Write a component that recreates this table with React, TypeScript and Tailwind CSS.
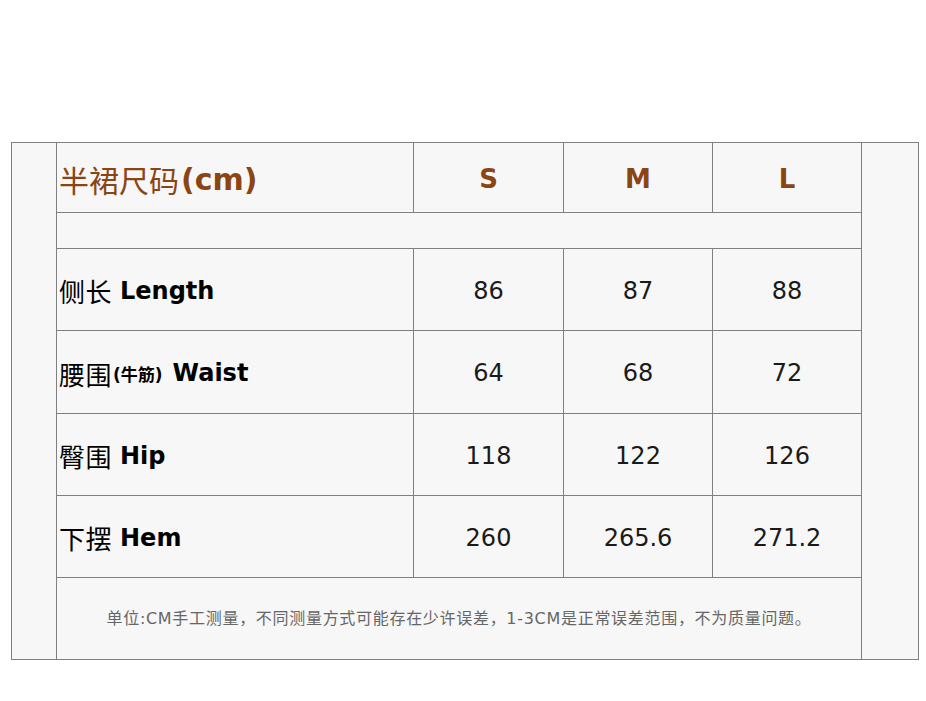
const brown = 'text-[#8b4513]';

const rows = [
  { zh: '侧长', en: 'Length', vals: ['86', '87', '88'] },
  { zh: '腰围', note: '(牛筋)', en: 'Waist', vals: ['64', '68', '72'] },
  { zh: '臀围', en: 'Hip', vals: ['118', '122', '126'] },
  { zh: '下摆', en: 'Hem', vals: ['260', '265.6', '271.2'] },
];

// content heights; the bottom border is added on top (box-content)
const heights = ['h-[81px]', 'h-[82px]', 'h-[81px]', 'h-[81px]'];

const zhFont = "font-['Noto_Sans_CJK_SC',sans-serif]";
const latin = "font-['DejaVu_Sans','Noto_Sans_CJK_SC',sans-serif]";

export default function App() {
  return (
    <div className="w-[926px] h-[701px] bg-white pt-[142px] pl-[11px]">
      <div className="flex w-[908px] h-[518px] border border-[#808080] bg-[#f7f7f7]">
        <div className="w-[44px]" />

        {/* size table */}
        <div className="w-[806px] border-x border-[#808080] flex flex-col">
          {/* header */}
          <div className="flex h-[70px] border-b border-[#808080]">
            <div className="w-[356px] flex items-center pl-[2px] pt-[4px]">
              <span className={`${zhFont} ${brown} text-[30px]`}>半裙尺码</span>
              <span className={`${latin} ${brown} text-[30px] font-bold ml-[2px]`}>(cm)</span>
            </div>
            {['S', 'M', 'L'].map((s, i) => (
              <div
                key={s}
                className={`${i === 0 ? 'w-[150px]' : 'w-[149px]'} border-l border-[#808080] flex items-center justify-center pt-[4px] ${latin} ${brown} text-[26px] font-bold`}
              >
                {s}
              </div>
            ))}
          </div>

          {/* empty row */}
          <div className="h-[36px] border-b border-[#808080]" />

          {rows.map((r, ri) => (
            <div key={r.en} className={`flex ${heights[ri]} box-content border-b border-[#808080]`}>
              <div className="w-[356px] flex items-center pl-[2px] pt-[2px] text-black">
                <span className={`${zhFont} text-[26px] tracking-[0.5px]`}>{r.zh}</span>
                {r.note && <span className={`${latin} text-[17px] font-bold mt-[6px] ml-[1px]`}>{r.note}</span>}
                <span className={`${latin} text-[24px] font-bold ${r.note ? 'ml-[10px]' : 'ml-[8px]'}`}>{r.en}</span>
              </div>
              {r.vals.map((v, i) => (
                <div
                  key={i}
                  className={`${i === 0 ? 'w-[150px]' : 'w-[149px]'} border-l border-[#808080] flex items-center justify-center pt-[2px] ${latin} text-[24px] text-[#1a1a1a]`}
                >
                  {v}
                </div>
              ))}
            </div>
          ))}

          {/* footer note */}
          <div className="flex-1 flex items-center justify-center pt-[1px]">
            <span className={`${latin} text-[16px] tracking-[0.7px] text-[#666]`}>
              单位:CM手工测量，不同测量方式可能存在少许误差，1-3CM是正常误差范围，不为质量问题。
            </span>
          </div>
        </div>

        <div className="flex-1" />
      </div>
    </div>
  );
}
